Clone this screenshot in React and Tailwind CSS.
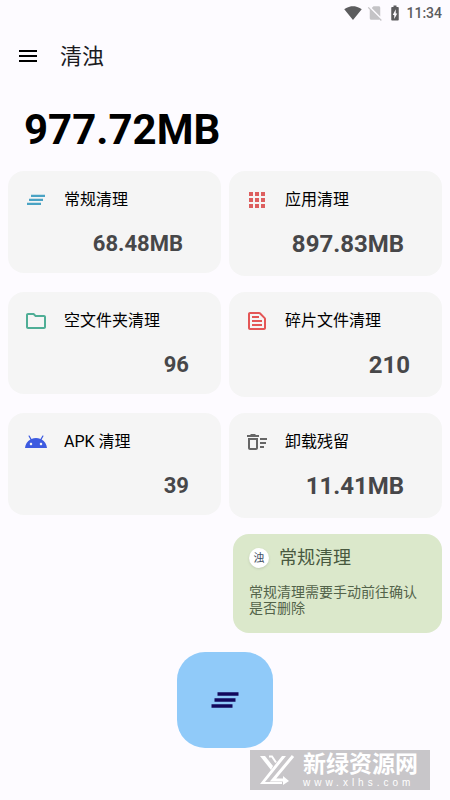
import React from 'react';
import {
  MdApps,
  MdBatteryChargingFull,
  MdMenu,
  MdNoSim,
  MdOutlineDeleteSweep,
  MdOutlineFolder,
  MdOutlineTextSnippet,
  MdSignalWifi4Bar,
} from 'react-icons/md';

const ClearAll = ({ className }) => (
  <svg viewBox="0 0 24 24" fill="currentColor" className={className} aria-hidden="true">
    <path d="M7 6.8h14v2.3H7zM5 10.8h14v2.3H5zM3 14.8h14v2.3H3z" />
  </svg>
);

const AndroidHead = ({ className }) => (
  <svg viewBox="0 0 24 24" fill="currentColor" className={className} aria-hidden="true">
    <path d="M17.6 9.48l1.84-3.18c.16-.31.04-.69-.26-.85-.29-.15-.65-.06-.83.22l-1.88 3.24c-2.86-1.21-6.08-1.21-8.94 0L5.65 5.67c-.19-.29-.58-.38-.87-.2-.28.18-.37.54-.22.83L6.4 9.48C3.3 11.25 1.28 14.44 1 18h22c-.28-3.56-2.3-6.75-5.4-8.52zM7 15.25c-.69 0-1.25-.56-1.25-1.25S6.31 12.75 7 12.75 8.25 13.31 8.25 14 7.69 15.25 7 15.25zm10 0c-.69 0-1.25-.56-1.25-1.25s.56-1.25 1.25-1.25 1.25.56 1.25 1.25-.56 1.25-1.25 1.25z" />
  </svg>
);

const leftCards = [
  { title: '常规清理', value: '68.48MB', icon: ClearAll, color: 'text-[#4aa3c4]', pad: 'pr-[38px]' },
  { title: '空文件夹清理', value: '96', icon: MdOutlineFolder, color: 'text-[#4fae96]', pad: 'pr-8' },
  { title: 'APK 清理', value: '39', icon: AndroidHead, color: 'text-[#3d5be0]', pad: 'pr-8' },
];

const rightCards = [
  { title: '应用清理', value: '897.83MB', icon: MdApps, color: 'text-[#dd5f5f]', pad: 'pr-[38px]' },
  { title: '碎片文件清理', value: '210', icon: MdOutlineTextSnippet, color: 'text-[#e45656]', pad: 'pr-8' },
  { title: '卸载残留', value: '11.41MB', icon: MdOutlineDeleteSweep, color: 'text-[#666666]', pad: 'pr-[38px]' },
];

const CleanCard = ({ card, large }) => {
  const Icon = card.icon;

  return (
    <button
      type="button"
      className={`block w-full rounded-2xl bg-[#f5f5f5] pt-[17px] text-left ${large ? 'pb-4' : 'pb-[13px]'}`}
    >
      <span className="flex items-center gap-4 px-4">
        <Icon className={`h-6 w-6 shrink-0 ${card.color}`} />
        <span className="text-base leading-6 text-black">{card.title}</span>
      </span>
      <span
        className={`mt-4 block text-right font-bold text-[#474749] ${card.pad} ${large ? 'text-[24px] leading-8' : 'text-[22px] leading-8'}`}
      >
        {card.value}
      </span>
    </button>
  );
};

const StatusBar = () => (
  <div className="flex h-[26px] items-center justify-end pr-2 text-[#5c5c5e]">
    <MdSignalWifi4Bar className="h-[18px] w-[18px]" />
    <MdNoSim className="ml-1 h-[18px] w-[18px] text-[#c4c3c6]" />
    <MdBatteryChargingFull className="ml-[2px] h-[18px] w-[18px]" />
    <span className="ml-[2px] text-sm font-medium">11:34</span>
  </div>
);

const Watermark = () => (
  <div className="mt-[2px] mr-5 mb-[10px] ml-auto flex h-10 w-[180px] items-center gap-2 bg-[#c8c6c9] pl-[10px] text-white">
    <svg viewBox="0 0 35 30" className="h-[30px] w-[35px] shrink-0" fill="none" stroke="currentColor" aria-hidden="true">
      <path d="M0 1h5l8 10-2 4z" fill="currentColor" stroke="none" />
      <path d="M9 1.500h3l4 6" strokeWidth="2" />
      <path d="M22 1h4L5 27h17v2H0z" fill="currentColor" stroke="none" />
      <path d="M33 1L13 25h11" strokeWidth="3" />
      <path d="M23 21l6 5-6 4z" fill="currentColor" stroke="none" />
    </svg>
    <div className="flex flex-col pt-[2px]">
      <span className="text-[23px] font-bold leading-6">新绿资源网</span>
      <span className="font-['Liberation_Sans',sans-serif] text-[10px] leading-3 tracking-[4px]">www.xlhs.com</span>
    </div>
  </div>
);

const App = () => {
  return (
    <div className="min-h-screen bg-[#fdfbff] font-[Roboto,'Noto_Sans_CJK_SC',sans-serif]">
      <StatusBar />

      <header className="flex h-[60px] items-center gap-5 px-4">
        <button type="button" aria-label="菜单" className="text-black">
          <MdMenu className="h-6 w-6" />
        </button>
        <h1 className="pt-px text-[22px] leading-8 text-[#1c1b1f]">清浊</h1>
      </header>

      <main className="flex flex-col">
        <p className="px-6 pt-[21px] pb-[19px] text-[42px] font-bold leading-[45px] text-black">977.72MB</p>

        <div className="grid grid-cols-2 gap-2 px-2">
          {/* Left column cards are slightly shorter, rows still line up */}
          <div className="flex flex-col gap-[19px]">
            {leftCards.map((card) => (
              <CleanCard key={card.title} card={card} />
            ))}
          </div>
          <div className="flex flex-col gap-4">
            {rightCards.map((card) => (
              <CleanCard key={card.title} card={card} large />
            ))}
          </div>
        </div>

        {/* Hint card */}
        <section className="mt-4 mr-2 ml-auto w-[209px] rounded-2xl bg-[#dbe8cb] px-4 pt-3 pb-[17px]">
          <div className="flex items-center gap-[10px]">
            <span className="flex h-5 w-5 items-center justify-center rounded-full bg-white text-[11px] leading-none text-[#3f4f63] shadow-sm">
              浊
            </span>
            <h2 className="text-lg leading-6 text-[#48583f]">常规清理</h2>
          </div>
          <p className="mt-[14px] text-sm leading-4 text-[#53634a]">常规清理需要手动前往确认是否删除</p>
        </section>

        <button
          type="button"
          aria-label="开始清理"
          className="mx-auto mt-[19px] flex h-24 w-24 items-center justify-center rounded-[28px] bg-[#90caf9] text-[#12085c]"
        >
          <ClearAll className="h-9 w-9" />
        </button>
      </main>

      <Watermark />
    </div>
  );
};

export default App;
